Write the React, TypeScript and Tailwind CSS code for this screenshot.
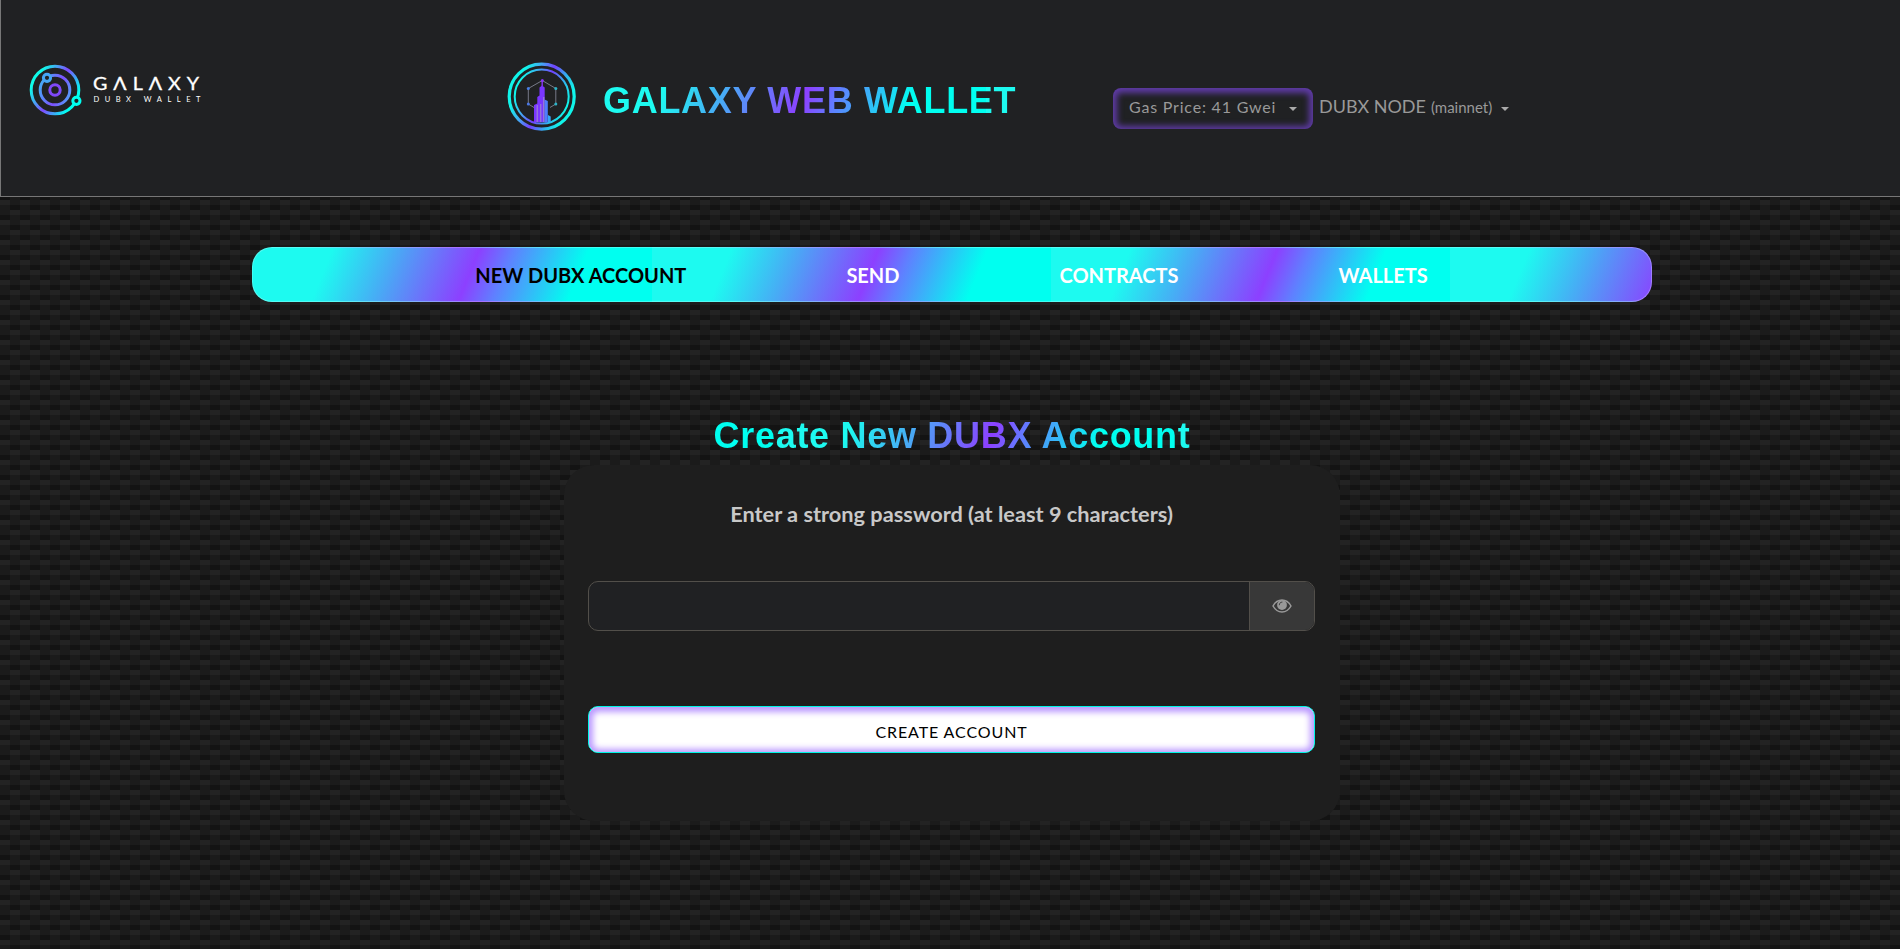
function GalaxyLogo() {
  return (
    <svg width="176" height="56" viewBox="28 62 176 56" className="block">
      <defs>
        <linearGradient id="outer" gradientUnits="userSpaceOnUse" x1="30" y1="72" x2="82" y2="104">
          <stop offset="0" stopColor="#0ffbe9" />
          <stop offset="0.15" stopColor="#0ffbe9" />
          <stop offset="0.5" stopColor="#7d4dff" />
          <stop offset="0.52" stopColor="#7d4dff" />
          <stop offset="0.85" stopColor="#00fff0" />
        </linearGradient>
        <linearGradient id="middle" gradientUnits="userSpaceOnUse" x1="40" y1="84" x2="70" y2="96">
          <stop offset="0" stopColor="#46a9f5" />
          <stop offset="0.6" stopColor="#7d50ff" />
          <stop offset="1" stopColor="#559bf8" />
        </linearGradient>
      </defs>
      <g fill="none" strokeWidth="3">
        <circle cx="55" cy="90" r="23.8" stroke="url(#outer)" />
        <circle cx="55" cy="90" r="14.8" stroke="url(#middle)" />
        <circle cx="55" cy="90" r="5.2" stroke="#7f48fa" />
        <circle cx="47" cy="77.8" r="3.6" stroke="#45a5f6" fill="#202123" />
        <circle cx="76.4" cy="100.8" r="3.6" stroke="#00fff0" fill="#202123" />
      </g>
      <g fill="#ffffff" fontFamily="Lato, sans-serif">
        <text x="93" y="90" fontSize="16.5" textLength="112" lengthAdjust="spacingAndGlyphs" letterSpacing="5" stroke="#ffffff" strokeWidth="0.3">
          GΛLΛXY
        </text>
        <text x="93.5" y="101.8" fontSize="7.5" textLength="107" lengthAdjust="spacing">
          DUBX WALLET
        </text>
      </g>
    </svg>
  );
}

function TowerBadge() {
  return (
    <svg width="72" height="72" viewBox="506 61 72 72" className="block">
      <defs>
        <linearGradient id="ring" gradientUnits="userSpaceOnUse" x1="512" y1="84" x2="573" y2="109">
          <stop offset="0.1" stopColor="#10f5ea" />
          <stop offset="0.3" stopColor="#43a9f3" />
          <stop offset="0.5" stopColor="#7240ff" />
          <stop offset="0.72" stopColor="#2fb5ee" />
          <stop offset="0.9" stopColor="#10f5ea" />
        </linearGradient>
      </defs>
      <circle cx="541.7" cy="96.6" r="32.5" fill="none" stroke="url(#ring)" strokeWidth="3.2" />
      <circle cx="541.7" cy="96.6" r="27" fill="none" stroke="url(#ring)" strokeWidth="2" />
      <path d="M542.3 80.5 555.8 88.5V104L550 107.5M542.3 80.5 528.3 88.5V104L534 107.5" fill="none" stroke="#777a88" strokeWidth="1" />
      <g>
        <circle cx="542.3" cy="80.5" r="1.5" fill="#8a35f5" />
        <circle cx="528.3" cy="88.5" r="1.5" fill="#477ee6" />
        <circle cx="528.3" cy="104" r="1.5" fill="#4a78e6" />
        <circle cx="555.8" cy="88.5" r="1.5" fill="#2bb4c8" />
        <circle cx="555.8" cy="104" r="1.5" fill="#2bb4c8" />
      </g>
      <path d="M542.2 80V86" stroke="#8a35f5" strokeWidth="1.4" />
      <path d="M534 122V105L537.3 103.5V97L539.5 95.5V87.5L542 85.5 544.7 87.5V122Z" fill="#7a36ff" />
      <path d="M544.5 99.5 547.8 101V122.5H544.5Z" fill="#4f7dff" />
      <path d="M548 122.5V115L550.7 116.5V121.8Z" fill="#35a7f8" />
      <path d="M540.8 104V122M537.2 105V122M543.8 97V122" stroke="#a59bc8" strokeWidth="0.9" />
    </svg>
  );
}

function Caret() {
  return <span className="inline-block border-x-4 border-t-4 border-x-transparent border-t-[#aaaaaa]" />;
}

function EyeIcon() {
  return (
    <svg width="20" height="14" viewBox="0 0 20 14" className="block">
      <path d="M1 7C3.2 3.1 6.3 1.1 10 1.1S16.8 3.1 19 7C16.8 10.9 13.7 12.9 10 12.9S3.2 10.9 1 7Z" fill="none" stroke="#999999" strokeWidth="1.5" />
      <circle cx="10" cy="6" r="4.9" fill="#999999" />
      <path d="M7.3 5.8C7.3 4.2 8.4 3.1 10 3.1" fill="none" stroke="#383838" strokeWidth="0.9" strokeLinecap="round" />
    </svg>
  );
}

const galaxyGradient =
  "bg-[image:linear-gradient(112deg,#1dfaf0_19%,#47acf5_34%,#8c40ff_54%,#5f80ff_62%,#00fff0_80%)] bg-[length:399px_100%]";

const tabs = ["NEW DUBX ACCOUNT", "SEND", "CONTRACTS", "WALLETS"];

export default function App() {
  return (
    <div className="flex h-[949px] w-full flex-col overflow-hidden bg-[#1b1b1b] bg-[image:conic-gradient(from_270deg_at_10px_5px,#232323_90deg,transparent_0),conic-gradient(from_270deg_at_10px_5px,#131313_90deg,transparent_0),conic-gradient(from_270deg_at_10px_5px,#232323_90deg,transparent_0),conic-gradient(from_270deg_at_10px_5px,#131313_90deg,transparent_0)] bg-[length:20px_20px] bg-[position:0_0,0_15px,10px_10px,10px_5px] font-[Lato,sans-serif]">
      <header className="flex h-[197px] shrink-0 items-start border-b border-l border-[#777777] bg-[#202123]">
        <div className="ml-[27px] mt-[62px] w-[176px]">
          <GalaxyLogo />
        </div>
        <div className="ml-[302px] mt-[61px] w-[72px]">
          <TowerBadge />
        </div>
        <h1 className={`ml-[25px] mt-[80px] w-[413px] whitespace-nowrap bg-clip-text bg-[position:-16px_0] font-['Liberation_Sans',sans-serif] text-[36px] font-bold leading-[42px] tracking-[0.7px] text-transparent ${galaxyGradient}`}>
          GALAXY WEB WALLET
        </h1>
        <button className="ml-[97px] mt-[88px] flex h-[41px] w-[200px] items-center rounded-lg pb-[3px] pl-4 text-[16px] tracking-[0.8px] text-[#999999] shadow-[inset_0_1px_6px_4px_#5f3ba6]">
          <span>Gas Price: 41 Gwei</span>
          <span className="ml-[13px] flex pt-[3px]">
            <Caret />
          </span>
        </button>
        <div className="ml-[6px] mt-[93px] flex items-baseline whitespace-nowrap text-[18px] leading-[26px] text-[#999999]">
          <span>DUBX NODE</span>
          <span className="ml-[5px] text-[15px]">(mainnet)</span>
          <span className="ml-[9px] flex -translate-y-[2px]">
            <Caret />
          </span>
        </div>
      </header>

      <nav className={`ml-[252px] mt-[50px] flex h-[55px] w-[1400px] shrink-0 items-center justify-center gap-[160px] rounded-[20px] border border-white/25 pr-px text-[20px] font-bold text-white ${galaxyGradient}`}>
        {tabs.map((tab, i) => (
          <a key={tab} className={i === 0 ? "text-black" : ""}>
            {tab}
          </a>
        ))}
      </nav>

      <main className="ml-[564px] flex w-[776px] flex-col items-center">
        <h2 className={`mt-[113px] w-[776px] bg-clip-text bg-[position:212px_0] text-center font-['Liberation_Sans',sans-serif] text-[36px] font-bold leading-[42px] tracking-[0.7px] text-transparent ${galaxyGradient}`}>
          Create New DUBX Account
        </h2>
        <section className="mt-[8px] flex h-[356px] w-full flex-col items-start rounded-[30px] bg-[#1e1e1e] px-6">
          <h4 className="mt-[36px] w-full pr-px text-center text-[21.75px] font-bold leading-[26px] text-[#c8c8c8]">
            Enter a strong password (at least 9 characters)
          </h4>
          <div className="mt-[54px] flex h-[50px] w-[727px] overflow-hidden rounded-[10px] border border-[#524f4a] bg-[#202123]">
            <input type="password" className="min-w-0 flex-1 bg-transparent px-4 outline-none" />
            <span className="flex w-[65px] items-center justify-center border-l border-[#524f4a] bg-[#383838]">
              <EyeIcon />
            </span>
          </div>
          <button className="mt-[75px] h-[47px] w-[727px] rounded-[10px] border border-[#00f5e5] bg-white pt-[5px] text-[16px] tracking-[0.9px] text-black shadow-[inset_0_1px_6px_4px_#ba98ff]">
            CREATE ACCOUNT
          </button>
        </section>
      </main>
    </div>
  );
}
